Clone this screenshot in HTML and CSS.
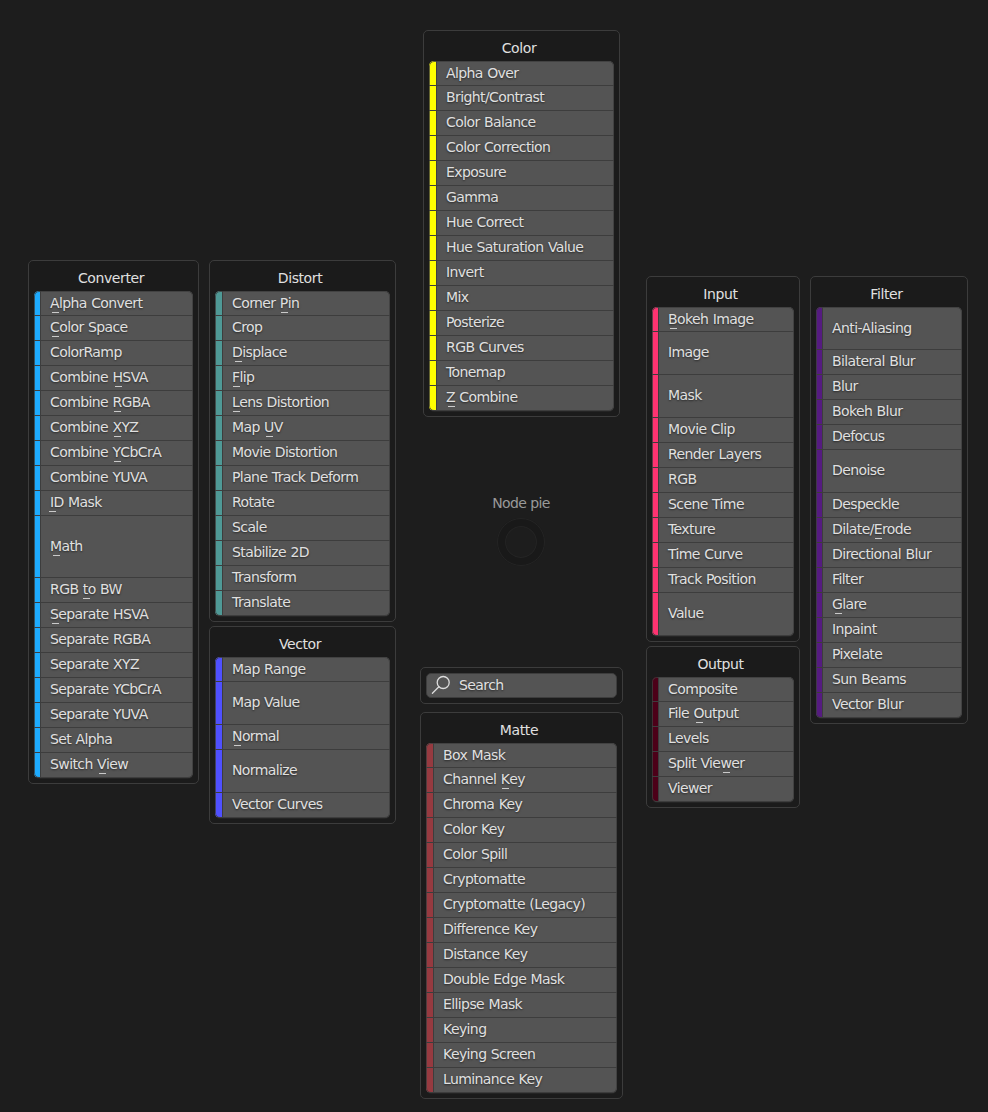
FILE: index.html
```html
<!DOCTYPE html>
<html lang="en">
<head>
<meta charset="utf-8">
<title>Node pie</title>
<link rel="stylesheet" href="styles.css">
</head>
<body>
<main class="pie">
  <div class="column column-converter">
    <section class="panel converter narrow">
      <h2>Converter</h2>
      <ul>
        <li><u>A</u>lpha Convert</li>
        <li><u>C</u>olor Space</li>
        <li>ColorRamp</li>
        <li>Combine <u>H</u>SVA</li>
        <li>Combine <u>R</u>GBA</li>
        <li>Combine <u>X</u>YZ</li>
        <li>Combine <u>Y</u>CbCrA</li>
        <li>Combine YUVA</li>
        <li><u>I</u>D Mask</li>
        <li class="huge"><u>M</u>ath</li>
        <li>RGB <u>t</u>o BW</li>
        <li><u>S</u>eparate HSVA</li>
        <li>Separate RGBA</li>
        <li>Separate XYZ</li>
        <li>Separate YCbCrA</li>
        <li>Separate YUVA</li>
        <li>Set Alpha</li>
        <li>Switch <u>V</u>iew</li>
      </ul>
    </section>
  </div>
  <div class="column column-distort">
    <section class="panel distort">
      <h2>Distort</h2>
      <ul>
        <li>Corner <u>P</u>in</li>
        <li>Crop</li>
        <li><u>D</u>isplace</li>
        <li><u>F</u>lip</li>
        <li><u>L</u>ens Distortion</li>
        <li>Map <u>U</u>V</li>
        <li>Movie Distortion</li>
        <li>Plane Track Deform</li>
        <li>Rotate</li>
        <li>Scale</li>
        <li>Stabilize 2D</li>
        <li>Transform</li>
        <li>Translate</li>
      </ul>
    </section>
    <section class="panel vector">
      <h2>Vector</h2>
      <ul>
        <li>Map Range</li>
        <li class="tall">Map Value</li>
        <li><u>N</u>ormal</li>
        <li class="tall">Normalize</li>
        <li>Vector Curves</li>
      </ul>
    </section>
  </div>
  <div class="column column-center">
    <section class="panel color">
      <h2>Color</h2>
      <ul>
        <li>Alpha Over</li>
        <li>Bright/Contrast</li>
        <li>Color Balance</li>
        <li>Color Correction</li>
        <li>Exposure</li>
        <li>Gamma</li>
        <li>Hue Correct</li>
        <li>Hue Saturation Value</li>
        <li>Invert</li>
        <li>Mix</li>
        <li>Posterize</li>
        <li>RGB Curves</li>
        <li>Tonemap</li>
        <li><u>Z</u> Combine</li>
      </ul>
    </section>
    <div class="hub">
      <span>Node pie</span>
      <div class="ring"></div>
    </div>
    <div class="panel search">
      <div class="search-button">
        <svg width="20" height="20" viewBox="0 0 20 20" fill="none" stroke="#dcdcdc" stroke-width="1.3" stroke-linecap="round"><circle cx="12.2" cy="7.5" r="6"/><path d="M7.9 11.8 1.4 18.2"/></svg>
        <span>Search</span>
      </div>
    </div>
    <section class="panel matte">
      <h2>Matte</h2>
      <ul>
        <li>Box Mask</li>
        <li>Channel <u>K</u>ey</li>
        <li>Chroma Key</li>
        <li>Color Key</li>
        <li>Color Spill</li>
        <li>Cryptomatte</li>
        <li>Cryptomatte (Legacy)</li>
        <li>Difference Key</li>
        <li>Distance Key</li>
        <li>Double Edge Mask</li>
        <li>Ellipse Mask</li>
        <li>Keying</li>
        <li>Keying Screen</li>
        <li>Luminance Key</li>
      </ul>
    </section>
  </div>
  <div class="column column-input">
    <section class="panel input narrow">
      <h2>Input</h2>
      <ul>
        <li><u>B</u>okeh Image</li>
        <li class="tall">Image</li>
        <li class="tall">Mask</li>
        <li>Movie Clip</li>
        <li>Render Layers</li>
        <li>RGB</li>
        <li>Scene Time</li>
        <li>Texture</li>
        <li>Time Curve</li>
        <li>Track Position</li>
        <li class="tall">Value</li>
      </ul>
    </section>
    <section class="panel output narrow">
      <h2>Output</h2>
      <ul>
        <li>Composite</li>
        <li>File <u>O</u>utput</li>
        <li>Levels</li>
        <li>Split Vie<u>w</u>er</li>
        <li>Viewer</li>
      </ul>
    </section>
  </div>
  <div class="column column-filter">
    <section class="panel filter narrow">
      <h2>Filter</h2>
      <ul>
        <li class="tall">Anti-Aliasing</li>
        <li>Bilateral Blur</li>
        <li>Blur</li>
        <li>Bokeh Blur</li>
        <li>Defocus</li>
        <li class="tall">Denoise</li>
        <li>Despeckle</li>
        <li>Dilate/<u>E</u>rode</li>
        <li>Directional Blur</li>
        <li>Filter</li>
        <li><u>G</u>lare</li>
        <li>Inpaint</li>
        <li>Pixelate</li>
        <li>Sun Beams</li>
        <li>Vector Blur</li>
      </ul>
    </section>
  </div>
</main>
</body>
</html>
```
FILE: styles.css
```css
* { box-sizing: border-box; }

body {
  margin: 0;
  background: #1d1d1d;
  color: #e0e0e0;
  font: 14px/24px "DejaVu Sans", sans-serif;
  letter-spacing: -0.6px;
  white-space: nowrap;
}

.pie {
  display: flex;
  align-items: flex-start;
  width: 988px;
  height: 1112px;
  padding-left: 28px;
  overflow: hidden;
}

.column {
  display: flex;
  flex-direction: column;
  flex: none;
}
.column-converter { width: 171px; margin: 260px 10px 0 0; }
.column-distort { width: 187px; margin: 260px 24px 0 0; gap: 4px; }
.column-center { width: 203px; margin: 30px 23px 0 0; align-items: center; }
.column-input { width: 154px; margin: 276px 10px 0 0; gap: 4px; }
.column-filter { width: 158px; margin-top: 276px; }

.panel {
  width: 100%;
  padding: 0 5px 5px;
  border: 1px solid #3c3c3c;
  border-radius: 5px;
  background: #1b1b1b;
}
.panel h2 {
  height: 30px;
  margin: 0;
  padding: 5px 5px 0 0;
  font-size: inherit;
  font-weight: normal;
  letter-spacing: -0.4px;
  text-align: center;
}
.panel ul {
  margin: 0;
  padding: 0;
  list-style: none;
  border-radius: 5px;
  overflow: hidden;
  box-shadow: 0 1px 0 #242424;
  position: relative;
}
.panel ul::after {
  content: "";
  position: absolute;
  inset: 0;
  border: 1px solid rgba(61, 61, 61, 0.8);
  border-radius: 5px;
}

.panel li {
  display: flex;
  align-items: center;
  height: 25px;
  padding-bottom: 2px;
  border-bottom: 1px solid #3d3d3d;
  background: #545454;
  text-shadow: 0 1px 2px rgba(0, 0, 0, 0.55);
  white-space: pre;
  word-spacing: 0.5px;
}
.panel li:first-child { padding-bottom: 0; }
.panel li.tall { height: 43px; }
.panel li.huge { height: 62px; }
.panel li::before {
  content: "";
  flex: none;
  align-self: stretch;
  width: 8px;
  margin: 0 9px -2px 0;
  border-right: 1px solid #3d3d3d;
  background: var(--accent);
}
.panel li::before { width: 7px; }
.panel.narrow li::before { width: 6px; }
.panel li:first-child::before { margin-bottom: 0; }

/* Shortcut marker below the accelerator letter */
.panel u {
  position: relative;
  text-decoration: none;
}
.panel u::after {
  content: "";
  position: absolute;
  left: calc(50% - 2.5px);
  bottom: 2px;
  width: 7px;
  height: 1px;
  background: #cacaca;
}

.converter { --accent: #1dabff; }
.distort { --accent: #4f9996; }
.vector { --accent: #4f50ff; }
.color { --accent: #ffff00; width: 197px; }
.matte { --accent: #963a40; }
.input { --accent: #ff3371; }
.output { --accent: #4c0018; }
.filter { --accent: #551b80; }

.hub {
  display: flex;
  flex-direction: column;
  align-items: center;
  height: 250px;
  margin-right: 1px;
  padding-top: 74px;
  color: #999;
}
.ring {
  width: 48px;
  height: 48px;
  margin-top: 3px;
  border: 8px solid #191919;
  border-radius: 50%;
  outline: 1px solid #242424;
  outline-offset: -1px;
  box-shadow: inset 0 0 0 1px #252525;
}

.search {
  height: 37px;
  margin-bottom: 8px;
  padding: 5px;
}
.search-button {
  display: flex;
  align-items: center;
  gap: 8px;
  height: 25px;
  padding: 0 0 1px 4px;
  border: 1px solid #3d3d3d;
  border-radius: 5px;
  background: #545454;
  letter-spacing: -0.6px;
  text-shadow: 0 1px 2px rgba(0, 0, 0, 0.55);
}
```
